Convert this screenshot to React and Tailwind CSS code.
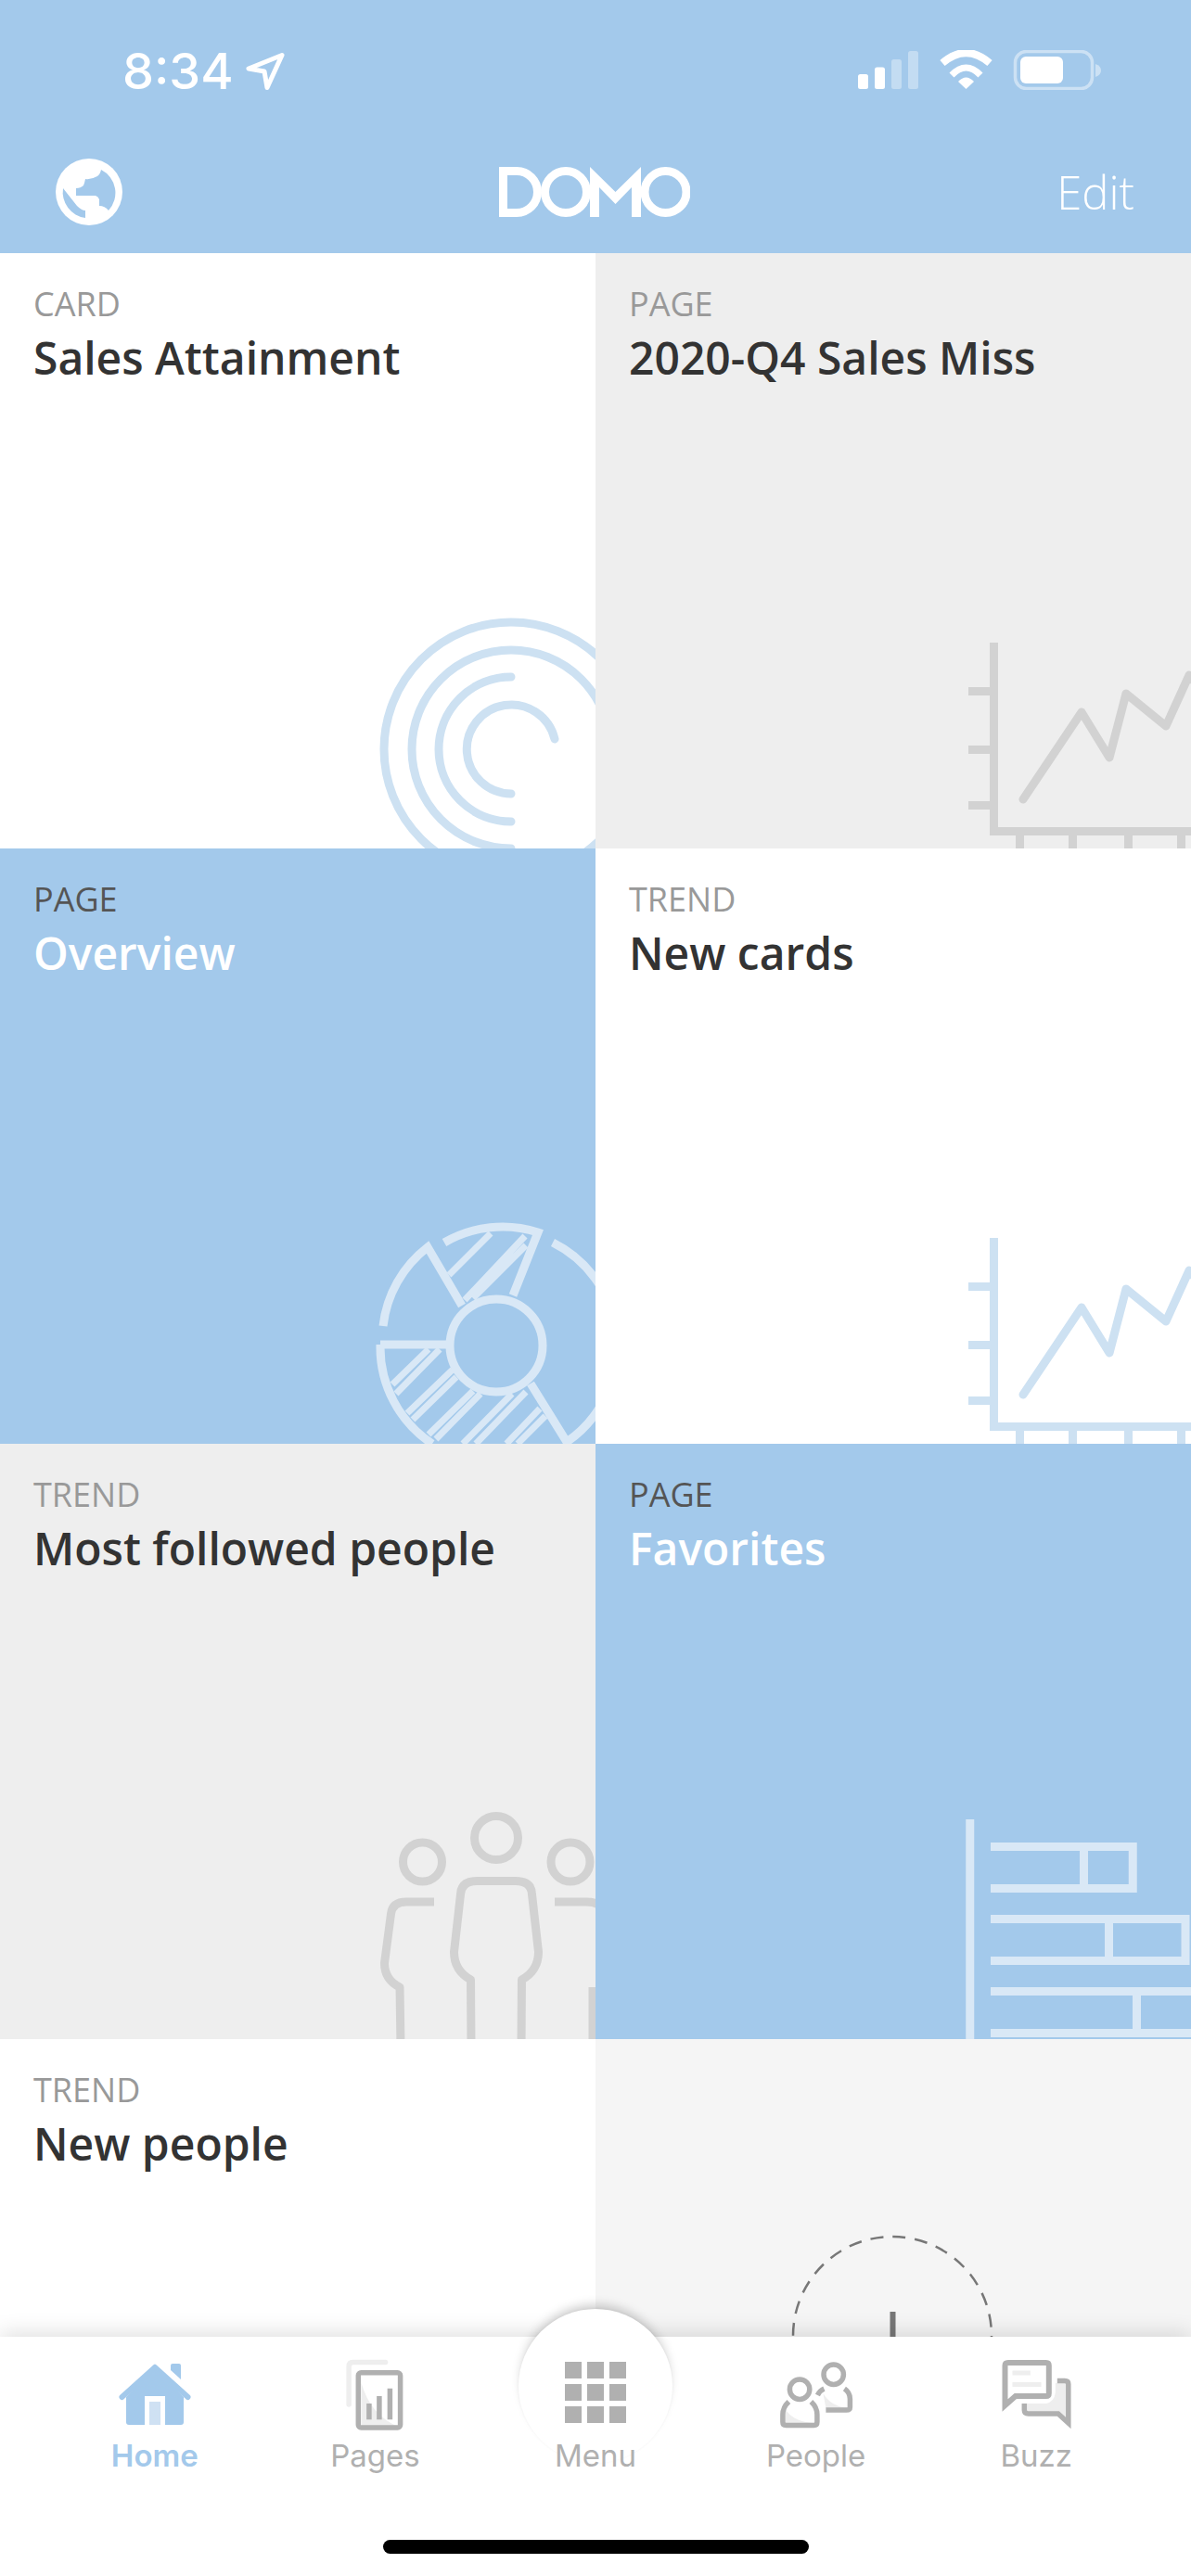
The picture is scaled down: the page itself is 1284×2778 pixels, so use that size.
import React from "react";

const lightBlue = "#cde1f2";
const paleBlue = "#d9e8f6";
const lineGray = "#d2d2d2";

// all tile art is drawn in a 642x642 box, same as the tile
const TileArt = ({ children }) => (
  <svg viewBox="0 0 642 642" className="absolute inset-0 h-full w-full" fill="none" aria-hidden="true">
    {children}
  </svg>
);

const RingsArt = () => (
  <TileArt>
    <g stroke={lightBlue} strokeWidth="9" strokeLinecap="round">
      <circle cx="551" cy="535" r="137" />
      <path d="M551 642 A107 107 0 1 1 658 535" />
      <path d="M551 613 A78 78 0 0 1 551 457" />
      <path d="M551 583 A48 48 0 1 1 598 524" />
    </g>
  </TileArt>
);

const ChartArt = ({ color }) => (
  <TileArt>
    <g stroke={color} strokeWidth="9">
      <path d="M429.5 420 V623.5 H660" />
      <path strokeWidth="9" d="M402 472.5 H426 M402 535.5 H426 M402 595.5 H426" />
      <path d="M457.5 628 V642 M514.5 628 V642 M574.5 628 V642 M631.5 628 V642" />
      <path strokeLinecap="round" strokeLinejoin="round" d="M461 589 L524 495 L554 544 L572 475 L615 510 L640 455 L660 480" />
    </g>
  </TileArt>
);

const DonutArt = () => (
  <TileArt>
    <g stroke={paleBlue} strokeWidth="9">
      <circle cx="535" cy="536" r="50" />
      <path d="M479 425 A125 125 0 0 1 580 414 L553 482" />
      <path d="M413 515 A125 125 0 0 1 461 430 L498 493" />
      <path d="M596 425 A125 125 0 0 1 611 640 L572 577" />
      <path d="M410 535 H481" />
      <path d="M410 535 A125 125 0 0 0 466 642" />
      <g strokeWidth="7">
        <path d="M529 415 L484 460 M566 418 L501 487 M567 428 L510 485" />
        <path d="M462 540 L423 578 M474 540 L427 588 M488 562 L439 609 M492 570 L445 616" />
        <path d="M510 585 L462 632 M518 588 L470 637 M552 588 L499 642 M567 586 L513 642 M582 604 L546 642 M588 612 L558 642" />
      </g>
    </g>
  </TileArt>
);

const PeopleArt = () => (
  <TileArt>
    <g stroke={lineGray} strokeWidth="9" strokeLinecap="round" strokeLinejoin="round">
      <circle cx="535" cy="425" r="23.5" />
      <circle cx="455.5" cy="451" r="21" />
      <circle cx="615" cy="451" r="21" />
      <path strokeLinecap="butt" d="M508 650 L507.5 578 Q489.5 568 489.5 548 L496.5 486 Q497 471.5 514 471.5 H556 Q573 471.5 573.5 486 L580.5 548 Q580.5 568 562.5 578 L562 650" />
      <path strokeLinecap="butt" d="M432 650 L431 586 Q414.5 578 414.5 560 L421.5 507 Q423 494 438 494 H468" />
      <path strokeLinecap="butt" d="M598 494 H632 Q650 494 650 507 M639 650 V586" />
    </g>
  </TileArt>
);

const BrickRow = ({ top, right, split }) => (
  <path d={`M426 ${top} H${right} V${top + 45} H426 M${split} ${top} V${top + 45}`} />
);

const BricksArt = () => (
  <TileArt>
    <g stroke={paleBlue} strokeWidth="9">
      <path d="M403.75 405 V642" />
      <BrickRow top={434.5} right={579.25} split={526.5} />
      <BrickRow top={512.5} right={636} split={553.5} />
      <BrickRow top={590.5} right={660} split={583.5} />
    </g>
  </TileArt>
);

const DashedArt = () => (
  <TileArt>
    <circle cx="320" cy="320" r="107" stroke="#777777" strokeWidth="2.5" strokeDasharray="14 10" />
    <path d="M320.5 294 V330" stroke="#777777" strokeWidth="6" />
  </TileArt>
);

const tiles = [
  { kind: "CARD", title: "Sales Attainment", bg: "bg-white", art: <RingsArt /> },
  { kind: "PAGE", title: "2020-Q4 Sales Miss", bg: "bg-[#eeeeee]", art: <ChartArt color={lineGray} /> },
  { kind: "PAGE", title: "Overview", bg: "bg-[#a3c9eb]", blue: true, art: <DonutArt /> },
  { kind: "TREND", title: "New cards", bg: "bg-white", art: <ChartArt color={lightBlue} /> },
  { kind: "TREND", title: "Most followed people", bg: "bg-[#eeeeee]", art: <PeopleArt /> },
  { kind: "PAGE", title: "Favorites", bg: "bg-[#a3c9eb]", blue: true, art: <BricksArt /> },
  { kind: "TREND", title: "New people", bg: "bg-white" },
  { bg: "bg-[#f5f5f5]", art: <DashedArt /> },
];

const Tile = ({ tile }) => (
  <div className={`relative h-[642px] overflow-hidden px-[36px] pt-[31px] ${tile.bg}`}>
    {tile.art}
    {tile.kind && (
      <div className="relative">
        <div className={`text-[36px] leading-[48px] ${tile.blue ? "text-[#555555]" : "text-[#999999]"}`}>{tile.kind}</div>
        <div className={`mt-[4px] text-[48px] font-semibold leading-[60px] ${tile.blue ? "text-white" : "text-[#333333]"}`}>{tile.title}</div>
      </div>
    )}
  </div>
);

const StatusBar = () => (
  <div className="flex h-[130px] items-start justify-between pl-[132px] pr-[96px] pt-[54px]">
    <div className="flex items-center gap-[13px]">
      <span className="font-['Inter',sans-serif] text-[54px] leading-[46px] font-medium text-white">8:34</span>
      <svg viewBox="264 56 42 42" className="h-[42px] w-[42px]" fill="none" aria-hidden="true">
        <path d="M303 59.5 L267 74 L284 77 L287 94.5 Z" stroke="white" strokeWidth="5" strokeLinejoin="round" />
      </svg>
    </div>
    <svg viewBox="925 54 263 43" className="h-[43px] w-[263px]" aria-hidden="true">
      <rect x="925" y="80" width="11" height="16" rx="2.5" fill="white" />
      <rect x="943" y="72.5" width="11" height="23.5" rx="2.5" fill="white" />
      <rect x="961" y="64" width="11" height="32" rx="2.5" fill="white" fillOpacity="0.35" />
      <rect x="979" y="55" width="11" height="41" rx="2.5" fill="white" fillOpacity="0.35" />
      <g fill="none" stroke="white">
        <path d="M1016 68 Q1041.5 46 1067 68" strokeWidth="8" />
        <path d="M1026 81 Q1041.5 65 1057 81" strokeWidth="7" />
      </g>
      <path d="M1033 88 Q1041.5 79 1050 88 L1041.5 96 Z" fill="white" />
      <rect x="1094.5" y="55.5" width="83" height="40" rx="12" fill="none" stroke="white" strokeOpacity="0.45" strokeWidth="3.5" />
      <rect x="1100" y="61" width="46" height="29" rx="6" fill="white" />
      <path d="M1181 69 Q1187 71 1187 76 Q1187 81 1181 83 Z" fill="white" fillOpacity="0.45" />
    </svg>
  </div>
);

const GlobeIcon = () => (
  <svg viewBox="60 171 72 72" className="h-[72px] w-[72px]" aria-hidden="true">
    <circle cx="96" cy="207" r="36" fill="white" />
    <path fill="#a3c9eb" d="M109 183 Q108 188 105 190 Q98 194 92 193 Q91 198 90 200 Q87 203 82 203 V211 H103 Q106 212 107 215 V222 Q113 222 117 227 A28 28 0 0 0 109 183 Z" />
    <path fill="#a3c9eb" d="M68 203 L83 222 Q88 227 92 227 V235 A28 28 0 0 1 68 203 Z" />
  </svg>
);

const DomoLogo = () => (
  <svg viewBox="539 180 206 54" className="h-[54px] w-[206px]" aria-label="Domo">
    <g fill="none" stroke="white" strokeWidth="9">
      <path d="M543.5 184.5 H558 A22.5 22.5 0 0 1 558 229.5 H543.5 Z" />
      <circle cx="611" cy="207" r="22.5" />
      <circle cx="718.5" cy="207" r="22.5" />
    </g>
    <path fill="white" d="M637 180 L664.5 207 L692 180 V234 H682 V202 L664.5 220 L647 202 V234 H637 Z" />
  </svg>
);

const Header = () => (
  <div className="h-[273px] shrink-0 bg-[#a3c9eb]">
    <StatusBar />
    <div className="mt-[41px] grid h-[72px] grid-cols-3 items-center pl-[60px] pr-[61px]">
      <GlobeIcon />
      <div className="flex justify-center">
        <DomoLogo />
      </div>
      <div className="text-right text-[49px] font-light leading-[60px] text-white">Edit</div>
    </div>
  </div>
);

const TabIcon = ({ x, children }) => (
  <svg viewBox={`${x} 2540 120 85`} className="h-[85px] w-[120px]" fill="none" aria-hidden="true">
    {children}
  </svg>
);

const gray = "#b0b0b0";
const faint = "#eeeeee";

const tabs = [
  {
    label: "Home",
    active: true,
    icon: (
      <TabIcon x={107}>
        <path d="M167 2553 L131.5 2585 M167 2553 L202.5 2585" stroke="#a3c9eb" strokeWidth="6" strokeLinecap="round" />
        <path d="M136 2585 L167 2553 L198 2585 V2612 Q198 2615 195 2615 H139 Q136 2615 136 2612 Z" fill="#a3c9eb" />
        <path d="M184 2551 Q184 2549 186 2549 H193 Q195 2549 195 2551 V2566 L184 2556 Z" fill="#a3c9eb" />
        <rect x="156" y="2584" width="22" height="31" fill="white" />
        <rect x="161" y="2590" width="12" height="25" fill="#cfe1f3" />
      </TabIcon>
    ),
  },
  {
    label: "Pages",
    icon: (
      <TabIcon x={344.4}>
        <path d="M416 2547.5 H381 Q376.5 2547.5 376.5 2552 V2593" stroke={faint} strokeWidth="5.5" strokeLinecap="round" />
        <path d="M390 2570 Q400 2605 430 2617 H390 Z" fill={faint} />
        <rect x="386.7" y="2558.7" width="45.3" height="59.3" rx="3" stroke={gray} strokeWidth="5.5" />
        <path d="M398.3 2609.3 V2592 M409.3 2609.3 V2584 M420.8 2609.3 V2575.7" stroke={gray} strokeWidth="5.5" />
      </TabIcon>
    ),
  },
  {
    label: "Menu",
    icon: (
      <TabIcon x={582}>
        <g fill={gray}>
          {[2547, 2571, 2595].map((y) =>
            [609, 633, 657].map((x) => <rect key={`${x}-${y}`} x={x} y={y} width="18" height="18" />)
          )}
        </g>
      </TabIcon>
    ),
  },
  {
    label: "People",
    icon: (
      <TabIcon x={819.6}>
        <path d="M846 2598 Q855 2612 878 2613 H846 Z" fill={faint} />
        <path d="M887 2581 Q895 2595 914 2597 H890 Z" fill={faint} />
        <g stroke={gray} strokeWidth="5.5">
          <circle cx="861.7" cy="2576.7" r="10.7" />
          <circle cx="898.3" cy="2560.7" r="10.7" />
          <path d="M850 2590 Q843.5 2596 843.5 2604 V2612 Q843.5 2615.5 847 2615.5 H877 Q880.5 2615.5 880.5 2612 V2604 Q880.5 2596 874 2590" />
          <path d="M881 2583 Q883.5 2578 888 2576 M910 2576 Q916 2580 916 2587 V2596 Q916 2599 912 2599 H890" />
        </g>
      </TabIcon>
    ),
  },
  {
    label: "Buzz",
    icon: (
      <TabIcon x={1057.2}>
        <path d="M1138 2570 H1150 V2612 L1140 2601 H1107 V2592 H1128 Q1137 2590 1138 2580 Z" fill={faint} />
        <path d="M1091.7 2559 H1111 M1091.7 2571.5 H1122.7" stroke={faint} strokeWidth="5" />
        <path d="M1083.7 2594 V2551 Q1083.7 2548 1087 2548 H1128 Q1131 2548 1131 2551 V2581 Q1131 2584 1128 2584 H1095 Z" stroke={gray} strokeWidth="6" />
        <path d="M1140 2567.5 H1148 Q1152 2567.5 1152 2571 V2613 L1141 2603 H1109 Q1104.5 2603 1104.5 2599 V2592" stroke={gray} strokeWidth="5.5" />
      </TabIcon>
    ),
  },
];

const TabBar = () => (
  <div className="relative z-10 flex h-[258px] shrink-0 flex-col bg-white font-['Inter',sans-serif] shadow-[0_-4px_22px_rgba(0,0,0,0.13)]">
    <div className="absolute left-[559px] top-[-30px] h-[166px] w-[166px] rounded-full bg-white shadow-[0_-8px_12px_-4px_rgba(0,0,0,0.22),0_0_3px_rgba(0,0,0,0.04)]" />
    <div className="relative grid grid-cols-5 px-[48px] pt-[20px]">
      {tabs.map((tab) => (
        <div key={tab.label} className="flex flex-col items-center">
          {tab.icon}
          <span className={`mt-[1px] text-[33px] leading-[44px] ${tab.active ? "font-semibold text-[#a3c9eb]" : "text-[#b0b0b0]"}`}>
            {tab.label}
          </span>
        </div>
      ))}
    </div>
    <div className="relative mt-auto mb-[24px] h-[15px] w-[459px] self-center rounded-full bg-black" />
  </div>
);

export default function App() {
  return (
    <div className="flex h-[2778px] w-[1284px] flex-col overflow-hidden bg-white font-['Open_Sans',sans-serif]">
      <Header />
      <div className="min-h-0 flex-1 overflow-hidden">
        <div className="grid grid-cols-2">
          {tiles.map((tile, i) => (
            <Tile key={i} tile={tile} />
          ))}
        </div>
      </div>
      <TabBar />
    </div>
  );
}
